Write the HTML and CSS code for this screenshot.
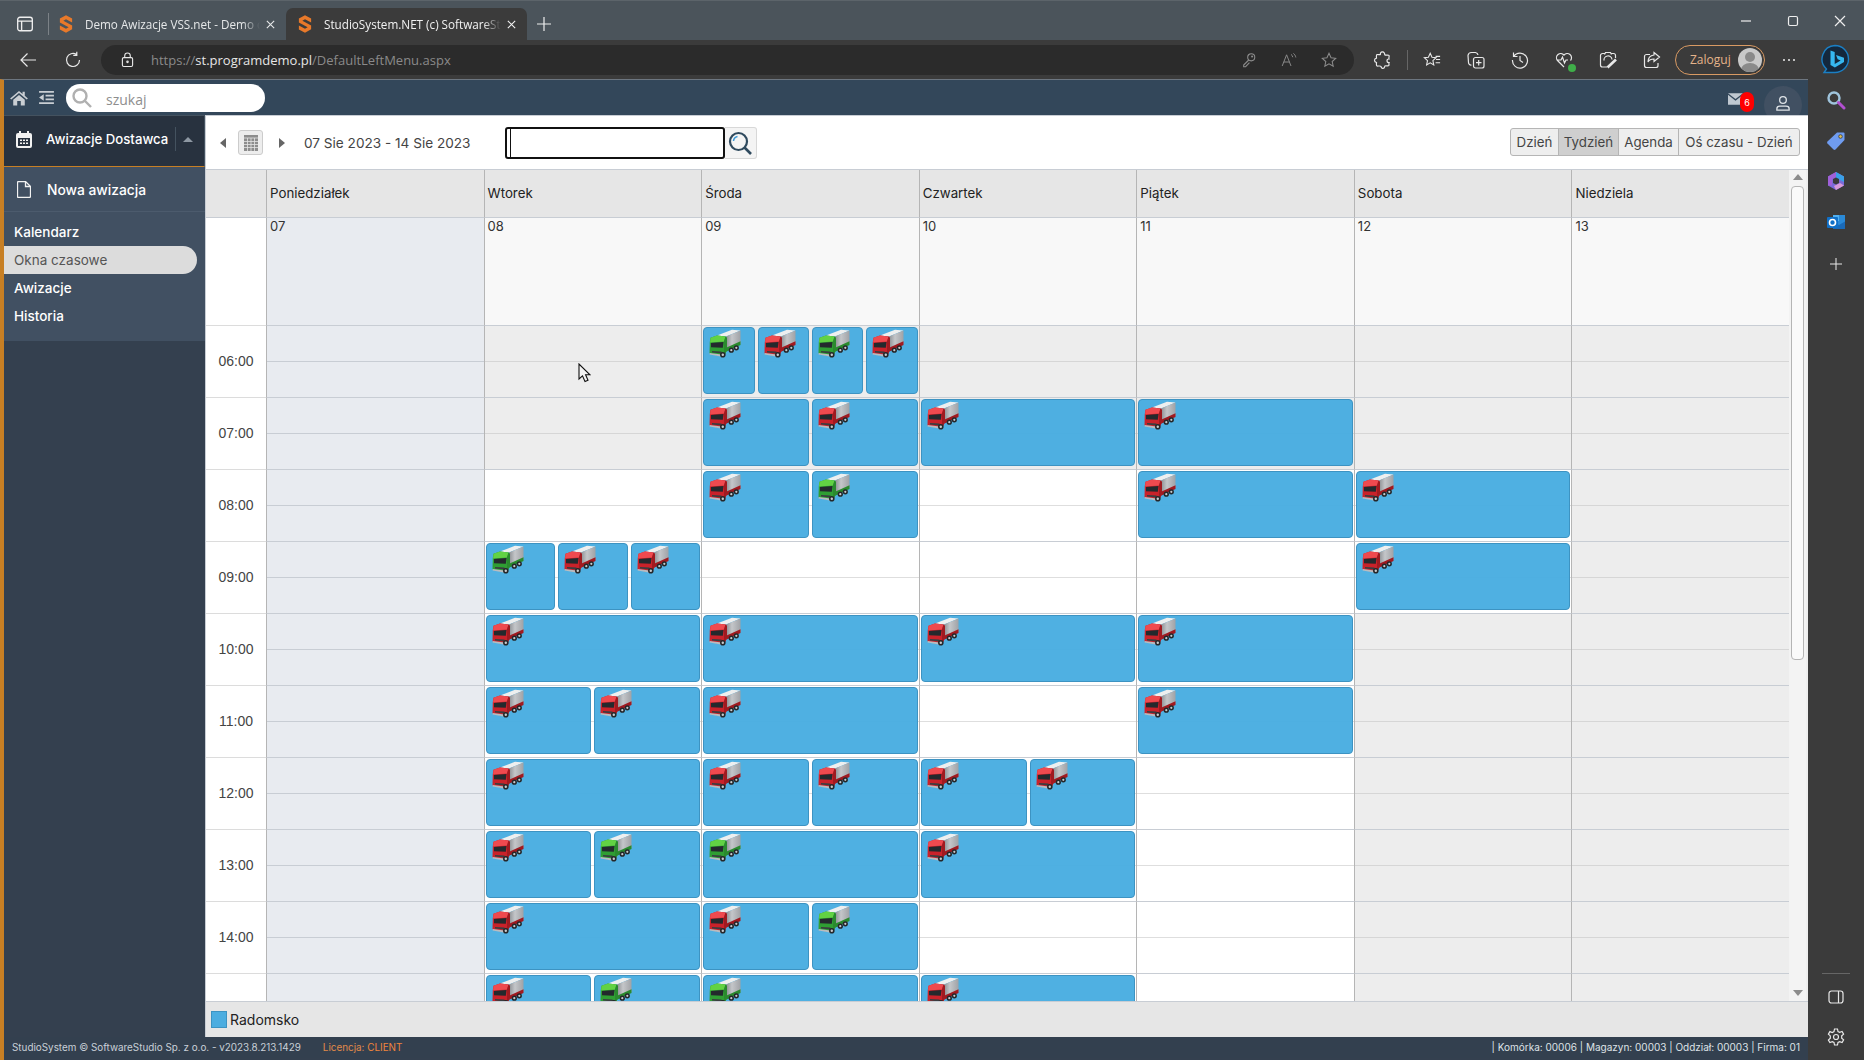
FILE: index.html
```html
<!DOCTYPE html>
<html lang="pl">
<head>
<meta charset="utf-8">
<title>StudioSystem.NET</title>
<link rel="stylesheet" href="styles.css">
</head>
<body>
<svg class="defs" width="0" height="0" aria-hidden="true">
  <defs>
    <linearGradient id="box" x1="0" y1="0" x2="1" y2="0"><stop offset="0" stop-color="#83868a"/><stop offset=".45" stop-color="#c4c6c9"/><stop offset="1" stop-color="#a0a2a6"/></linearGradient>
    <symbol id="truck" viewBox="0 0 32 29">
      <path d="M8 6.500 23 .8 31.500 1.500 17 7.500z" fill="#eeefef"/>
      <path d="M17 7.500 31.500 1.500V15L16 22z" fill="url(#box)"/>
      <path d="M16.500 19 31.500 12.300V16L16.500 23z" fill="var(--cabd)"/>
      <path d="M1.500 8.800 8 6.500 16.500 7.500 18 9v11.500L15 28 .5 24.500 .8 13z" fill="var(--cab)"/>
      <path d="M1.500 8.800 8 6.500 16.500 7.500 15 12.500 1 13.500z" fill="var(--cabl)"/>
      <path d="M16.500 7.500 18 9v11.500L15 27.500 15 12.500z" fill="var(--cabd)"/>
      <path d="M2 14 14.500 13 13.800 18.800 2 18.300z" fill="#24292d"/>
      <path d="M3 22 12.500 22.600v1.800L3 23.500z" fill="#3a3d40"/>
      <path d="M.6 24 14.500 25.700V28L.6 25.500z" fill="#b9bcc0"/>
      <circle cx="13.800" cy="25.800" r="2.800" fill="#24272a"/><circle cx="13.800" cy="25.800" r="1.200" fill="#c9cbce"/>
      <circle cx="22.300" cy="21.200" r="2.600" fill="#24272a"/><circle cx="22.300" cy="21.200" r="1.100" fill="#c9cbce"/>
      <circle cx="27.300" cy="18.800" r="2.600" fill="#24272a"/><circle cx="27.300" cy="18.800" r="1.100" fill="#c9cbce"/>
    </symbol>
    <symbol id="fav" viewBox="0 0 16 20">
      <path d="M8 0 15 3.800v4.600L8 4.600 5 6.200 15 11.600V16L8 20 1 16.200v-4.600l7 3.800 3-1.600L1 8.400V3.800z" fill="#e8792a"/>
    </symbol>
  </defs>
</svg>

<header class="tabstrip">
  <svg class="ic tabs-ic" viewBox="0 0 16 16"><rect x="1.500" y="2" width="13" height="12" rx="2"/><path d="M1.500 5.500h13M5 5.500V14"/></svg>
  <span class="tab-sep"></span>
  <div class="tab">
    <svg class="fav"><use href="#fav"/></svg>
    <span class="tab-title">Demo Awizacje VSS.net - Demo c</span>
    <svg class="ic tab-x" viewBox="0 0 12 12"><path d="M2 2l8 8M10 2l-8 8"/></svg>
  </div>
  <div class="tab active">
    <svg class="fav"><use href="#fav"/></svg>
    <span class="tab-title">StudioSystem.NET (c) SoftwareSt</span>
    <svg class="ic tab-x" viewBox="0 0 12 12"><path d="M2 2l8 8M10 2l-8 8"/></svg>
  </div>
  <svg class="ic tab-new" viewBox="0 0 14 14"><path d="M7 0v14M0 7h14"/></svg>
  <div class="winctl">
    <svg class="ic" viewBox="0 0 12 12"><path d="M1 6h10"/></svg>
    <svg class="ic" viewBox="0 0 12 12"><rect x="1.500" y="1.500" width="9" height="9" rx="1.500"/></svg>
    <svg class="ic" viewBox="0 0 12 12"><path d="M1 1l10 10M11 1 1 11"/></svg>
  </div>
</header>

<div class="toolbar">
  <svg class="ic nav back" viewBox="0 0 18 18"><path d="M17 9H2M8.500 2.500 2 9l6.500 6.500"/></svg>
  <svg class="ic nav reload" viewBox="0 0 18 18"><path d="M15.500 9A6.500 6.500 0 1 1 12.500 3.500M12.800 0.800V4.300H9.300"/></svg>
  <div class="address">
    <svg class="ic lock" viewBox="0 0 14 16"><rect x="1.500" y="5.500" width="11" height="9.500" rx="1.500"/><path d="M4 5.500V3.500a3 3 0 0 1 6 0v2"/><circle cx="7" cy="10" r=".8"/></svg>
    <span class="url"><span class="dim">https://</span><span class="host">st.programdemo.pl</span><span class="dim">/DefaultLeftMenu.aspx</span></span>
    <div class="addr-icons">
      <svg class="ic faint" viewBox="0 0 18 18"><circle cx="11.500" cy="6" r="4"/><path d="M8.700 9 3 14.700V16.500h2.200L9.500 12"/><circle cx="12.500" cy="5" r=".6"/></svg>
      <svg class="ic faint" viewBox="0 0 20 18"><path d="M1.500 16.500 7 2.500l5.500 14M3.500 11.500h7M12.500 2c1.300.8 2 2 2.200 3.500M15.500 .8c1.700 1.200 2.700 3 3 5"/></svg>
      <svg class="ic faint" viewBox="0 0 18 18"><path d="M9 1.500l2.300 5 5.200.6-3.900 3.600 1.100 5.300L9 13.300 4.300 16l1.100-5.300L1.500 7.100l5.200-.6z"/></svg>
    </div>
  </div>
  <div class="tools">
    <svg class="ic tool" viewBox="0 0 18 18"><path d="M7.500 2a2.200 2.200 0 0 1 3.800 0c.5 1 .2 1.500.7 2 .6.500 3.500-.5 4 .5.500 1-.5 2.500 0 3.500-1 0-2 .2-2 1.800s1 1.900 2 1.900c-.5 1 .5 2-.3 3-.7.700-3-.4-3.700.3-.7.700 0 1.800-1.500 2.300-1.500.5-2.200-.6-2.500-1.800-.4-1-3-.2-4-.5-1-.5-.5-2.500-.5-3.500-1.200-.2-2-1-2-2.200s.8-2 2-2.200c0-1-.5-2.800.5-3.500 1-.5 2.700.5 3.300-.1.400-.4 0-1 .2-1.500z"/></svg>
    <span class="tool-sep"></span>
    <svg class="ic tool" viewBox="0 0 20 18"><path d="M8 1.500l2 4.500 4.500.5L11 9.700l1 4.800-4-2.400-4 2.400 1-4.800L1.500 6.500 6 6zM14 5h5M14.500 8.500h4.500M14 12h5"/></svg>
    <svg class="ic tool" viewBox="0 0 18 18"><rect x="6.500" y="6.500" width="10.500" height="10.500" rx="2"/><path d="M11.700 9v5.500M9 11.700h5.500M4.500 14A2.500 2.500 0 0 1 1.500 11.500L1 4.500A3.500 3.500 0 0 1 4.500 1.500h4A3 3 0 0 1 11 4"/></svg>
    <svg class="ic tool" viewBox="0 0 18 18"><path d="M2.500 1.500V5.500h4M2.700 5.500A7.500 7.500 0 1 1 1.500 9M9 5v4.500l3 2"/></svg>
    <span class="tool heart">
      <svg class="ic" viewBox="0 0 18 18"><path d="M9 16 2.500 9.500A4.200 4.200 0 0 1 9 4a4.200 4.200 0 0 1 6.500 5.500M1.500 9H6l1.500-3 2 6 1.500-3h2"/></svg>
      <i class="heart-ok"></i>
    </span>
    <svg class="ic tool" viewBox="0 0 18 18"><path d="M6 2.500H3.500a2 2 0 0 0-2 2V14a2 2 0 0 0 2 2H8M12 2.500h2.500a2 2 0 0 1 2 2V7M5.500 3.500 6.500 1.500h5l1 2M5 9.500a4 4 0 0 1 8 -1"/><path d="M8.500 16.500l8.500-8" stroke-width="2.600"/></svg>
    <svg class="ic tool" viewBox="0 0 18 18"><path d="M7 3.500H3.500A2 2 0 0 0 1.500 5.500v9a2 2 0 0 0 2 2H13a2 2 0 0 0 2-2V12M11 1.500 16.500 6 11 10.500V8c-3 0-5 1-6 3 0-4 2.500-6.500 6-7z"/></svg>
    <div class="signin"><span>Zaloguj</span><i class="avatar"><b></b><em></em></i></div>
    <div class="dots"><i></i><i></i><i></i></div>
  </div>
  <svg class="bing" viewBox="0 0 30 32"><path d="M15 1.500a13.500 13.500 0 0 1 0 27H4l2.500-3.500A13.500 13.500 0 0 1 15 1.500z" fill="#14283d" stroke="#1b7fc4" stroke-width="1.400"/><path d="M10.500 6.500l4.200 1.500v12l6-3.500-3-1.300-1.700-4.300 8 2.900v4.200l-9.100 5.500-4.400-2.500z" fill="#36b7f0"/></svg>
</div>

<div class="main">
  <div class="app">
    <div class="topbar">
      <svg class="home" viewBox="0 0 20 18"><path d="M10 1 0 9.500l1.300 1.300L10 3.500l8.700 7.300L20 9.500 16.500 6.500V2H14v2.400z"/><path d="M3.500 11 10 5.500l6.500 5.500v6.500h-4.500v-5H8v5H3.500z"/></svg>
      <svg class="listic" viewBox="0 0 16 14"><path d="M0 0h16v2H0zM7 4h9v2H7zM7 8h9v2H7zM0 12h16v2H0zM5 3.500v7L0 7z"/></svg>
      <div class="quick">
        <svg class="quick-ic" viewBox="0 0 22 22"><circle cx="9" cy="9" r="6.500"/><path d="M14 14l6 6"/></svg>
        <span>szukaj</span>
      </div>
      <div class="top-right">
        <span class="mail">
          <svg viewBox="0 0 18 14"><path d="M0 0h18L9 7z"/><path d="M0 2v12h18V2L9 9z"/></svg>
          <b class="badge">6</b>
        </span>
        <span class="user">
          <svg class="ic" viewBox="0 0 16 18"><circle cx="8" cy="5" r="3.800"/><path d="M1 16.500v-1.500c0-2 1.500-3 3.500-3h7c2 0 3.500 1 3.500 3v1.500z"/></svg>
        </span>
      </div>
    </div>
    <div class="work">
      <nav class="side">
        <div class="side-head">
          <svg class="side-ic" viewBox="0 0 16 17"><path d="M3 0h2v2h6V0h2v2h1a2 2 0 0 1 2 2v11a2 2 0 0 1-2 2H2a2 2 0 0 1-2-2V4a2 2 0 0 1 2-2h1zM2 7v8h12V7zm2 1.500h2v1.500H4zm3 0h2v1.500H7zm3 0h2v1.500h-2zm-6 3h2V13H4zm3 0h2V13H7zm3 0h2V13h-2z" fill-rule="evenodd"/></svg>
          <span class="side-title">Awizacje Dostawca</span>
          <span class="side-caret"></span>
        </div>
        <div class="side-panel">
          <div class="side-new">
            <svg class="doc" viewBox="0 0 14 17"><path d="M1.500.5h7l5 5V15a1.500 1.500 0 0 1-1.500 1.500H1.500A1 1 0 0 1 .5 15.500v-14a1 1 0 0 1 1-1z"/><path d="M8.500 1v4.500H13"/></svg>
            <span>Nowa awizacja</span>
          </div>
          <ul class="side-list">
            <li>Kalendarz</li>
            <li class="sel">Okna czasowe</li>
            <li>Awizacje</li>
            <li>Historia</li>
          </ul>
        </div>
      </nav>
      <section class="content">
        <div class="calbar">
          <span class="tri left"></span>
          <span class="calbtn"><svg viewBox="0 0 14 16"><path d="M0 0h14v16H0z" fill="#8d8d8d"/><path d="M0 3h14M0 6.500h14M0 9.500h14M0 12.500h14M3.500 3v13M7 3v13M10.500 3v13" stroke="#e4e4e4" stroke-width=".8"/></svg></span>
          <span class="tri right"></span>
          <span class="range">07 Sie 2023 - 14 Sie 2023</span>
          <div class="finder">
            <span class="finder-input"><i class="caret"></i></span>
            <span class="finder-btn"><svg viewBox="0 0 24 24"><circle cx="10.500" cy="10.500" r="8.500" fill="none" stroke="#2f4a5e" stroke-width="2.200"/><path d="M16.500 16.500 23 23" stroke="#2f4a5e" stroke-width="2.600"/><path d="M5.500 10a5 5 0 0 1 4-4.500" fill="none" stroke="#3f9ad6" stroke-width="1.500"/></svg></span>
          </div>
          <div class="views">
            <span class="view v1">Dzień</span><span class="view v2 on">Tydzień</span><span class="view v3">Agenda</span><span class="view v4">Oś czasu - Dzień</span>
          </div>
        </div>
        <div class="calwrap">
          <div class="cal">
            <div class="hd corner"></div><div class="hd">Poniedziałek</div><div class="hd">Wtorek</div><div class="hd">Środa</div><div class="hd">Czwartek</div><div class="hd">Piątek</div><div class="hd">Sobota</div><div class="hd">Niedziela</div>
            <div class="ad corner"></div><div class="ad pastd">07</div><div class="ad">08</div><div class="ad">09</div><div class="ad">10</div><div class="ad">11</div><div class="ad">12</div><div class="ad">13</div>

            <div class="tm">06:00</div><div class="c past"></div><div class="c shut"></div>
            <div class="c shut"><div class="ev"><svg class="truck g"><use href="#truck"/></svg></div><div class="ev"><svg class="truck r"><use href="#truck"/></svg></div><div class="ev"><svg class="truck g"><use href="#truck"/></svg></div><div class="ev"><svg class="truck r"><use href="#truck"/></svg></div></div>
            <div class="c shut"></div><div class="c shut"></div><div class="c shut"></div><div class="c shut"></div>

            <div class="tm">07:00</div><div class="c past"></div><div class="c shut"></div>
            <div class="c shut"><div class="ev"><svg class="truck r"><use href="#truck"/></svg></div><div class="ev"><svg class="truck r"><use href="#truck"/></svg></div></div>
            <div class="c shut"><div class="ev"><svg class="truck r"><use href="#truck"/></svg></div></div>
            <div class="c shut"><div class="ev"><svg class="truck r"><use href="#truck"/></svg></div></div>
            <div class="c shut"></div><div class="c shut"></div>

            <div class="tm">08:00</div><div class="c past"></div><div class="c"></div>
            <div class="c"><div class="ev"><svg class="truck r"><use href="#truck"/></svg></div><div class="ev"><svg class="truck g"><use href="#truck"/></svg></div></div>
            <div class="c"></div>
            <div class="c"><div class="ev"><svg class="truck r"><use href="#truck"/></svg></div></div>
            <div class="c"><div class="ev"><svg class="truck r"><use href="#truck"/></svg></div></div>
            <div class="c shut"></div>

            <div class="tm">09:00</div><div class="c past"></div>
            <div class="c"><div class="ev"><svg class="truck g"><use href="#truck"/></svg></div><div class="ev"><svg class="truck r"><use href="#truck"/></svg></div><div class="ev"><svg class="truck r"><use href="#truck"/></svg></div></div>
            <div class="c"></div><div class="c"></div><div class="c"></div>
            <div class="c"><div class="ev"><svg class="truck r"><use href="#truck"/></svg></div></div>
            <div class="c shut"></div>

            <div class="tm">10:00</div><div class="c past"></div>
            <div class="c"><div class="ev"><svg class="truck r"><use href="#truck"/></svg></div></div>
            <div class="c"><div class="ev"><svg class="truck r"><use href="#truck"/></svg></div></div>
            <div class="c"><div class="ev"><svg class="truck r"><use href="#truck"/></svg></div></div>
            <div class="c"><div class="ev"><svg class="truck r"><use href="#truck"/></svg></div></div>
            <div class="c shut"></div><div class="c shut"></div>

            <div class="tm">11:00</div><div class="c past"></div>
            <div class="c"><div class="ev"><svg class="truck r"><use href="#truck"/></svg></div><div class="ev"><svg class="truck r"><use href="#truck"/></svg></div></div>
            <div class="c"><div class="ev"><svg class="truck r"><use href="#truck"/></svg></div></div>
            <div class="c"></div>
            <div class="c"><div class="ev"><svg class="truck r"><use href="#truck"/></svg></div></div>
            <div class="c shut"></div><div class="c shut"></div>

            <div class="tm">12:00</div><div class="c past"></div>
            <div class="c"><div class="ev"><svg class="truck r"><use href="#truck"/></svg></div></div>
            <div class="c"><div class="ev"><svg class="truck r"><use href="#truck"/></svg></div><div class="ev"><svg class="truck r"><use href="#truck"/></svg></div></div>
            <div class="c"><div class="ev"><svg class="truck r"><use href="#truck"/></svg></div><div class="ev"><svg class="truck r"><use href="#truck"/></svg></div></div>
            <div class="c"></div><div class="c shut"></div><div class="c shut"></div>

            <div class="tm">13:00</div><div class="c past"></div>
            <div class="c"><div class="ev"><svg class="truck r"><use href="#truck"/></svg></div><div class="ev"><svg class="truck g"><use href="#truck"/></svg></div></div>
            <div class="c"><div class="ev"><svg class="truck g"><use href="#truck"/></svg></div></div>
            <div class="c"><div class="ev"><svg class="truck r"><use href="#truck"/></svg></div></div>
            <div class="c"></div><div class="c shut"></div><div class="c shut"></div>

            <div class="tm">14:00</div><div class="c past"></div>
            <div class="c"><div class="ev"><svg class="truck r"><use href="#truck"/></svg></div></div>
            <div class="c"><div class="ev"><svg class="truck r"><use href="#truck"/></svg></div><div class="ev"><svg class="truck g"><use href="#truck"/></svg></div></div>
            <div class="c"></div><div class="c"></div><div class="c shut"></div><div class="c shut"></div>

            <div class="tm"></div><div class="c past"></div>
            <div class="c"><div class="ev"><svg class="truck r"><use href="#truck"/></svg></div><div class="ev"><svg class="truck g"><use href="#truck"/></svg></div></div>
            <div class="c"><div class="ev"><svg class="truck g"><use href="#truck"/></svg></div></div>
            <div class="c"><div class="ev"><svg class="truck r"><use href="#truck"/></svg></div></div>
            <div class="c"></div><div class="c shut"></div><div class="c shut"></div>
          </div>
          <div class="sb">
            <span class="sb-up"></span>
            <span class="sb-thumb"></span>
            <span class="sb-down"></span>
          </div>
        </div>
        <div class="legend"><i class="swatch"></i><span>Radomsko</span></div>
      </section>
    </div>
    <footer class="foot">
      <span class="copy">StudioSystem © SoftwareStudio Sp. z o.o. - v2023.8.213.1429</span>
      <span class="lic">Licencja: <b>CLIENT</b></span>
      <span class="foot-r">| Komórka: 00006 | Magazyn: 00003 | Oddział: 00003 | Firma: 01</span>
    </footer>
  </div>
  <aside class="rail">
    <svg class="rail-ic" viewBox="0 0 20 20"><circle cx="8" cy="8" r="5.500" fill="none" stroke="#9fc4dc" stroke-width="2.400"/><path d="M12.500 12.500 18 18" stroke="#b24fd0" stroke-width="3" stroke-linecap="round"/></svg>
    <svg class="rail-ic" viewBox="0 0 20 20"><path d="M11 1.500h6.500a1 1 0 0 1 1 1V9L9.500 18.500a1.500 1.500 0 0 1-2 0L1.500 12.500a1.500 1.500 0 0 1 0-2z" fill="#6f9cf0"/><circle cx="14.500" cy="5.500" r="1.800" fill="#e0c050" stroke="#3a3a3a" stroke-width=".8"/></svg>
    <svg class="rail-ic" viewBox="0 0 20 20"><path d="M10 1 18 5.500v9L10 19 2 14.500v-9z" fill="#7a6ad8"/><path d="M10 1 18 5.500 18 11 10 7z" fill="#3aa0e8"/><path d="M2 5.500 10 1v5L6 8.500v6L2 14.500z" fill="#a060d8"/><path d="M10 19 18 14.500 14 12 8 15z" fill="#d89ad8"/><path d="M7 8l3-1.500L13 8v4l-3 1.500L7 12z" fill="#3a3a3a"/></svg>
    <svg class="rail-ic" viewBox="0 0 20 20"><path d="M7 3h12v14H7z" fill="#2a8ad8"/><path d="M7 9.500 13 13l6-3.500V17H7z" fill="#1a6ab8"/><path d="M7 3h6v6H7z" fill="#50b0f0"/><rect x="1" y="5" width="11" height="11" rx="1" fill="#1070c8"/><circle cx="6.500" cy="10.500" r="3" fill="none" stroke="#fff" stroke-width="1.600"/></svg>
    <svg class="ic rail-plus" viewBox="0 0 14 14"><path d="M7 0v14M0 7h14"/></svg>
    <div class="rail-bottom">
      <span class="rail-sep"></span>
      <svg class="ic rail-b" viewBox="0 0 16 16"><rect x="1" y="2" width="14" height="12" rx="2.500"/><path d="M10.500 2v12"/></svg>
      <svg class="ic rail-b" viewBox="0 0 18 18"><circle cx="9" cy="9" r="2.500"/><path d="M7.500 1h3l.5 2.500 1.700.9 2.400-.9 1.500 2.600-1.900 1.700v2.400l1.900 1.700-1.500 2.600-2.400-.9-1.700.9L10.500 17h-3L7 14.500l-1.700-.9-2.400.9L1.400 12l1.900-1.700V7.900L1.400 6.200l1.500-2.600 2.400.9L7 3.600z"/></svg>
    </div>
  </aside>
</div>
<svg class="pointer" viewBox="0 0 13 20"><path d="M1 1v15l3.500-3.200L7 18.500l3-1.300-2.400-5.400H12z" fill="#f4f4f4" stroke="#111" stroke-width="1.100"/></svg>
</body>
</html>
```
FILE: styles.css
```css
* { box-sizing: border-box; }
html, body { margin: 0; height: 100%; overflow: hidden; }
body { width: 1864px; height: 1060px; display: flex; flex-direction: column; background: #3b3b3b; font-family: "Inter", "Liberation Sans", sans-serif; color: #333; position: relative; }
.defs { position: absolute; }
.ic { fill: none; stroke: currentColor; stroke-width: 1.200; flex: none; }
.pointer { position: absolute; left: 578px; top: 363px; width: 13px; height: 20px; }

/* browser chrome */
.tabstrip { height: 40px; flex: none; display: flex; align-items: flex-end; background: #4b545b; border-top: 1px solid #5c646a; color: #eee; font-family: "Open Sans", sans-serif; font-size: 11.700px; position: relative; }
.tabs-ic { width: 18px; height: 18px; margin: 0 0 7px 16px; }
.tab-sep { width: 1px; height: 22px; background: #7c8287; margin: 0 1px 5px 14px; }
.tab { display: flex; align-items: center; height: 32px; width: 236px; padding: 0 8px 0 9px; color: #e6e8e9; }
.tab.active { width: 241px; padding-left: 12px; background: #3b3b3b; border-radius: 7px 7px 0 0; color: #f2f2f2; }
.fav { width: 14px; height: 18px; flex: none; margin-right: 12px; }
.tab-title { flex: 1; min-width: 0; white-space: nowrap; -webkit-mask-image: linear-gradient(90deg, #000 90%, transparent); mask-image: linear-gradient(90deg, #000 90%, transparent); }
.tab-x { width: 11px; height: 11px; margin-left: 5px; margin-right: 2px; }
.tab-new { width: 14px; height: 14px; margin: 0 0 9px 10px; }
.winctl { margin-left: auto; display: flex; gap: 35px; padding: 0 18px 13px 0; }
.winctl .ic { width: 12px; height: 12px; }

.toolbar { height: 39px; flex: none; display: flex; align-items: center; background: #3b3b3b; color: #e8e8e8; }
.nav { width: 18px; height: 18px; }
.back { margin-left: 19px; }
.reload { margin-left: 27px; }
.address { display: flex; align-items: center; width: 1253px; height: 30px; margin-left: 19px; background: #2b2b2b; border-radius: 15px; padding: 0 17px 0 20px; }
.lock { width: 13px; height: 16px; }
.url { margin-left: 17px; font-family: "Open Sans", sans-serif; font-size: 13px; }
.dim { color: #8a8a8a; }
.host { color: #e6e6e6; }
.addr-icons { margin-left: auto; display: flex; gap: 24px; }
.addr-icons .ic { width: 16px; height: 16px; }
.faint { color: #8c8c8c; }
.tools { display: flex; align-items: center; margin-left: 19px; }
.tool { width: 18px; height: 18px; margin-right: 26px; flex: none; }
.tool-sep { width: 1px; height: 20px; background: #666; margin: 0 15px 0 -10px; }
.heart { position: relative; display: block; }
.heart .ic { width: 18px; height: 18px; display: block; }
.heart-ok { position: absolute; right: -3px; bottom: -3px; width: 8px; height: 8px; border-radius: 50%; background: #3fae49; }
.signin { display: flex; align-items: center; width: 90px; height: 30px; margin-left: -12px; border: 1px solid #d99a63; border-radius: 15px; padding: 0 2px 0 14px; font-family: "Open Sans", sans-serif; font-size: 12px; color: #e6b48a; }
.avatar { margin-left: auto; width: 24px; height: 24px; border-radius: 50%; background: #c9c9c9; position: relative; overflow: hidden; }
.avatar b { position: absolute; left: 7px; top: 4px; width: 10px; height: 10px; border-radius: 50%; background: #8a8a8a; }
.avatar em { position: absolute; left: 3px; top: 15px; width: 18px; height: 14px; border-radius: 50%; background: #8a8a8a; }
.dots { display: flex; gap: 3px; margin-left: 18px; }
.dots i { width: 2px; height: 2px; background: #eee; border-radius: 50%; }
.bing { width: 30px; height: 32px; margin-left: 25px; }

/* application */
.main { flex: 1; display: flex; min-height: 0; }
.app { width: 1808px; flex: none; display: flex; flex-direction: column; border-left: 4px solid #c77f24; border-top: 1px solid #6d7680; background: #34404f; }
.topbar { height: 35px; flex: none; display: flex; align-items: center; background: #33475a; }
.home { width: 18px; height: 16px; margin-left: 6px; fill: #c9ced3; }
.listic { width: 15px; height: 13px; margin-left: 11px; fill: #c9ced3; }
.quick { display: flex; align-items: center; width: 199px; height: 28px; margin-left: 12px; background: #fff; border-radius: 14px; }
.quick-ic { width: 22px; height: 22px; margin-left: 5px; fill: none; stroke: #b0b0b0; stroke-width: 2.400; }
.quick span { margin-left: 13px; padding-top: 3px; font-family: "Open Sans", sans-serif; font-size: 14px; color: #8e8e8e; }
.top-right { margin-left: auto; display: flex; align-items: flex-start; align-self: stretch; overflow: hidden; }
.mail { position: relative; margin-top: 13px; width: 24px; height: 14px; margin-right: 12px; }
.mail svg { width: 15px; height: 12px; fill: #c0c8d0; display: block; }
.badge { position: absolute; left: 12px; top: -1px; width: 14px; height: 20px; border-radius: 7px; background: #f00; color: #fff; font-size: 9px; font-weight: 400; display: flex; align-items: center; justify-content: center; }
.user { width: 38px; height: 38px; border-radius: 50%; background: #415062; margin: 6px 6px 0 0; display: flex; justify-content: center; padding-top: 9px; color: #dfe3e7; }
.user .ic { width: 14px; height: 17px; stroke-width: 1.500; }
.work { flex: 1; display: flex; min-height: 0; }
.side { width: 201px; flex: none; background: #34404f; }
.side-head { height: 52px; display: flex; align-items: center; padding-bottom: 4px; background: #28323f; border-bottom: 1px solid #c77f24; border-top: 1px solid #44525f; border-right: 1px solid #44525f; color: #fff; }
.side-ic { width: 16px; height: 17px; margin-left: 12px; fill: #f2f2f2; }
.side-title { margin-left: 14px; font-size: 13.200px; font-weight: 500; white-space: nowrap; }
.side-caret { margin-left: 7px; padding-left: 7px; border-left: 1px solid #44525f; height: 24px; display: flex; align-items: center; }
.side-caret::after { content: ""; border: 5px solid transparent; border-bottom: 5px solid #8e98a3; border-top: 0; }
.side-panel { background: #415062; padding-bottom: 11px; color: #fff; }
.side-new { display: flex; align-items: center; height: 45px; padding-top: 1px; border-bottom: 1px solid #4c5b6d; }
.doc { width: 14px; height: 17px; margin-left: 13px; fill: none; stroke: #f2f2f2; stroke-width: 1.300; }
.side-new span { margin-left: 16px; font-size: 13.800px; font-weight: 500; }
.side-list { list-style: none; margin: 6px 0 0; padding: 0; }
.side-list li { height: 28px; display: flex; align-items: center; padding-left: 10px; margin-right: 8px; font-size: 13.500px; font-weight: 500; border-radius: 0 14px 14px 0; }
.side-list .sel { background: #dcdcdc; color: #555; font-weight: 400; }
.content { flex: 1; min-width: 0; display: flex; flex-direction: column; background: #fff; border-left: 1px solid #c8cdd4; }
.calbar { height: 54px; flex: none; display: flex; align-items: center; border-top: 1px solid #c8cdd4; padding-right: 8px; }
.tri { width: 0; height: 0; border: 5px solid transparent; flex: none; }
.tri.left { border-right: 6px solid #666; border-left: 0; margin-left: 14px; }
.calbtn { width: 25px; height: 25px; margin-left: 12px; background: #ededed; border: 1px solid #ccc; border-radius: 3px; display: flex; align-items: center; justify-content: center; }
.calbtn svg { width: 14px; height: 16px; }
.tri.right { border-left: 6px solid #666; border-right: 0; margin-left: 16px; }
.range { margin-left: 19px; font-size: 13.600px; color: #444; white-space: nowrap; }
.finder { display: flex; align-items: center; margin-left: 34px; }
.finder-input { width: 220px; height: 32px; border: 2px solid #111; border-radius: 3px; background: #fff; display: flex; align-items: center; padding-left: 3px; }
.caret { width: 1px; height: 28px; background: #111; }
.finder-btn { width: 32px; height: 32px; background: #f4f4f4; border: 1px solid #d8d8d8; border-left: 0; border-radius: 0 3px 3px 0; display: flex; align-items: center; justify-content: center; }
.finder-btn svg { width: 24px; height: 24px; }
.views { margin-left: auto; display: flex; height: 28px; border: 1px solid #b5b5b5; border-radius: 3px; background: #eee; font-size: 13.300px; color: #444; margin-top: -1px; }
.view { display: flex; align-items: center; justify-content: center; border-left: 1px solid #b5b5b5; white-space: nowrap; }
.v1 { width: 47px; border-left: 0; }
.v2 { width: 60px; }
.v3 { width: 60px; }
.v4 { width: 121px; }
.view.on { background: #cfcfcf; }
.calwrap { flex: 1; min-height: 0; display: flex; overflow: hidden; background: #eee; border-top: 1px solid #c8cdd4; border-bottom: 1px solid #c8cdd4; }
.cal { width: 1583px; flex: none; display: grid; grid-template-columns: 60px repeat(7, 1fr); grid-template-rows: 47px 108px repeat(10, 72px); overflow: hidden; align-content: start; background: #fff; }
.hd { background: #e6e6e6; border-left: 1px solid #b5b5b5; padding: 0 0 2px 3px; display: flex; align-items: center; font-size: 13.300px; color: #222; }
.hd.corner { border-left: 0; }
.ad { background: #f8f8f8; border-top: 1px solid #c8cdd4; border-left: 1px solid #b5b5b5; padding: 0 0 0 3px; font-size: 13px; color: #333; }
.ad.corner { background: #fff; border-left: 0; }
.ad.pastd { background: #e8ebf0; }
.tm { background: #fff; border-top: 1px solid #dcdcdc; padding-bottom: 1px; display: flex; align-items: center; justify-content: center; font-family: "Liberation Sans", sans-serif; font-size: 14px; color: #444; }
.c { display: flex; gap: 3px; padding: 1px 1px 3px 1px; border-top: 1px solid #c8cdd4; border-left: 1px solid #b5b5b5; min-width: 0; background-color: #fff; background-image: linear-gradient(#dedede, #dedede); background-size: 100% 1px; background-position: 0 35px; background-repeat: no-repeat; }
.c.shut { background-color: #ededed; background-image: linear-gradient(#d6d6d6, #d6d6d6); }
.c.past { background-color: #e8ebf0; background-image: linear-gradient(#c8cdd4, #c8cdd4); }
.ev { flex: 1; min-width: 0; border: 1px solid #3d93c2; border-radius: 4px; background: rgba(70, 172, 224, 0.95); padding: 1px 0 0 5px; overflow: hidden; }
.truck { display: block; width: 32px; height: 29px; }
.truck.r { --cab: #c9222a; --cabl: #ef4a4f; --cabd: #a01a20; }
.truck.g { --cab: #2f9e33; --cabl: #62d244; --cabd: #2a8a2e; }
.sb { width: 17px; flex: none; margin-right: 2px; background: #f3f3f3; display: flex; flex-direction: column; align-items: center; position: relative; }
.sb-up { margin-top: 4px; border: 5px solid transparent; border-bottom: 6px solid #8c8c8c; border-top: 0; }
.sb-thumb { width: 13px; height: 474px; margin-top: 6px; background: #fafafa; border: 1px solid #b5b5b5; border-radius: 4px; }
.sb-down { margin-top: auto; margin-bottom: 5px; border: 5px solid transparent; border-top: 6px solid #8c8c8c; border-bottom: 0; }
.legend { height: 35px; flex: none; background: #e6e6e6; display: flex; align-items: center; padding-left: 5px; font-size: 14px; color: #222; }
.swatch { width: 16px; height: 17px; background: #4cade0; border: 1px solid #3d93c2; margin-right: 3px; }
.foot { height: 21px; flex: none; margin-bottom: 2px; display: flex; align-items: center; padding: 0 8px 1px 8px; background: #33404f; font-size: 9.900px; color: #c9d0d8; white-space: nowrap; }
.lic { margin-left: 22px; color: #e08a4a; }
.lic b { font-weight: 400; color: #f0843c; }
.foot-r { margin-left: auto; color: #dfe3e7; font-size: 10px; }

/* right rail */
.rail { flex: 1; background: #3b3b3b; display: flex; flex-direction: column; align-items: center; padding-top: 11px; color: #e8e8e8; }
.rail-ic { width: 20px; height: 20px; margin-bottom: 20.500px; flex: none; }
.rail-plus { width: 12px; height: 12px; margin-top: 6px; }
.rail-bottom { margin-top: auto; display: flex; flex-direction: column; align-items: center; gap: 14px; padding-bottom: 14px; }
.rail-sep { width: 28px; height: 1px; background: #666; margin-bottom: 1px; }
.rail-b { width: 16px; height: 16px; }
.rail-b + .rail-b { width: 18px; height: 18px; margin-top: 9px; }
```
